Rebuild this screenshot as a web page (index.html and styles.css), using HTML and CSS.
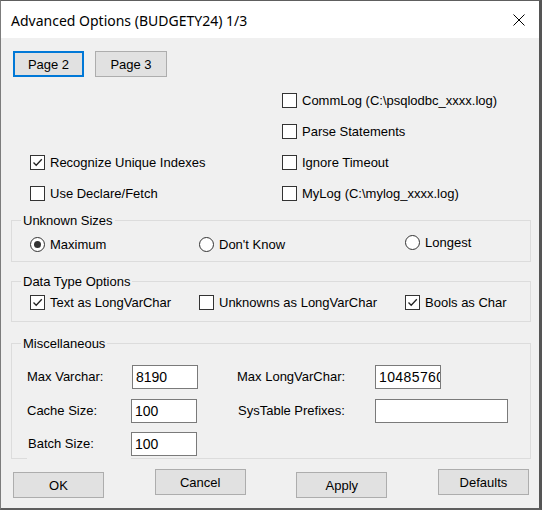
FILE: index.html
```html
<!DOCTYPE html>
<html>
<head>
<meta charset="utf-8">
<link rel="stylesheet" href="styles.css">
</head>
<body>
<div class="window">
  <div class="titlebar">
    <span class="title">Advanced Options (BUDGETY24) 1/3</span>
    <svg class="close" width="12" height="12" viewBox="0 0 12 12"><path d="M0.5 0.5 L11.5 11.5 M11.5 0.5 L0.5 11.5" stroke="#000" stroke-width="1" fill="none"/></svg>
  </div>
  <div class="content">
    <div class="pages">
      <button class="btn page default">Page 2</button>
      <button class="btn page">Page 3</button>
    </div>
    <div class="checks">
      <div></div>
      <label class="opt"><span class="cb"></span>CommLog (C:\psqlodbc_xxxx.log)</label>
      <div></div>
      <label class="opt"><span class="cb"></span>Parse Statements</label>
      <label class="opt"><span class="cb"><svg viewBox="0 0 13 13" width="13" height="13"><path d="M2.5 6.5 L5.2 9.3 L10.8 3.2" stroke="#222" stroke-width="1.3" fill="none"/></svg></span>Recognize Unique Indexes</label>
      <label class="opt"><span class="cb"></span>Ignore Timeout</label>
      <label class="opt"><span class="cb"></span>Use Declare/Fetch</label>
      <label class="opt"><span class="cb"></span>MyLog (C:\mylog_xxxx.log)</label>
    </div>

    <fieldset class="group unknown">
      <legend>Unknown Sizes</legend>
      <div class="row3 radios">
        <label class="opt low"><span class="rb on"></span>Maximum</label>
        <label class="opt low"><span class="rb"></span>Don't Know</label>
        <label class="opt"><span class="rb"></span>Longest</label>
      </div>
    </fieldset>

    <fieldset class="group dtype">
      <legend>Data Type Options</legend>
      <div class="row3">
        <label class="opt"><span class="cb"><svg viewBox="0 0 13 13" width="13" height="13"><path d="M2.5 6.5 L5.2 9.3 L10.8 3.2" stroke="#222" stroke-width="1.3" fill="none"/></svg></span>Text as LongVarChar</label>
        <label class="opt"><span class="cb"></span>Unknowns as LongVarChar</label>
        <label class="opt"><span class="cb"><svg viewBox="0 0 13 13" width="13" height="13"><path d="M2.5 6.5 L5.2 9.3 L10.8 3.2" stroke="#222" stroke-width="1.3" fill="none"/></svg></span>Bools as Char</label>
      </div>
    </fieldset>

    <fieldset class="group misc">
      <legend>Miscellaneous</legend>
      <div class="fields">
        <span class="flabel">Max Varchar:</span>
        <input class="edit short nudge" type="text" value="8190" readonly>
        <span class="flabel">Max LongVarChar:</span>
        <input class="edit short wide" type="text" value="10485760" readonly>

        <span class="flabel">Cache Size:</span>
        <input class="edit short" type="text" value="100" readonly>
        <span class="flabel nudge">SysTable Prefixes:</span>
        <input class="edit long" type="text" value="" readonly>

        <span class="flabel cover">Batch Size:</span>
        <input class="edit short" type="text" value="100" readonly>
      </div>
    </fieldset>

    <div class="actions">
      <button class="btn act lower">OK</button>
      <button class="btn act">Cancel</button>
      <button class="btn act lower">Apply</button>
      <button class="btn act">Defaults</button>
    </div>
  </div>
</div>
</body>
</html>
```

FILE: styles.css
```css
html, body {
  margin: 0;
  padding: 0;
  background: #ffffff;
}

body {
  font-family: "Liberation Sans", Arial, sans-serif;
  font-size: 13px;
  color: #000;
}

.window {
  width: 542px;
  height: 510px;
  box-sizing: border-box;
  border-top: 1px solid #5e5e5e;
  border-left: 1px solid #7c7c7c;
  border-right: 3px solid #555555;
  border-bottom: 2px solid #5e5e5e;
  background: #f0f0f0;
  display: flex;
  flex-direction: column;
  overflow: hidden;
}

.titlebar {
  height: 37px;
  flex: none;
  background: #ffffff;
  display: flex;
  align-items: flex-start;
  justify-content: space-between;
  padding: 0 14px 0 10px;
}

.title {
  font-family: "Noto Sans", "Open Sans", sans-serif;
  font-size: 14px;
  line-height: 20px;
  margin-top: 10px;
  color: #000;
}

.close {
  margin-top: 13px;
  display: block;
}

.content {
  flex: 1;
  display: flex;
  flex-direction: column;
}

/* buttons */
.btn {
  font-family: "Liberation Sans", Arial, sans-serif;
  font-size: 13px;
  color: #000;
  background: #e1e1e1;
  border: 1px solid #adadad;
  box-sizing: border-box;
  height: 26px;
  padding: 0;
  margin: 0;
  border-radius: 0;
}

.pages {
  display: flex;
  gap: 11px;
  padding-left: 12px;
  margin-top: 13px;
}

.page {
  width: 72px;
}

.page.default {
  width: 71px;
  border: 2px solid #0078d7;
}

/* option (checkbox/radio + label) */
.opt {
  display: flex;
  align-items: center;
  gap: 5px;
  height: 15px;
  line-height: 15px;
  white-space: nowrap;
}

.cb {
  width: 15px;
  height: 15px;
  box-sizing: border-box;
  border: 1px solid #333333;
  background: #ffffff;
  flex: none;
  display: flex;
  align-items: center;
  justify-content: center;
}

.cb svg {
  display: block;
}

.rb {
  width: 15px;
  height: 15px;
  box-sizing: border-box;
  border: 1px solid #333333;
  border-radius: 50%;
  background: #ffffff;
  flex: none;
  display: flex;
  align-items: center;
  justify-content: center;
}

.rb.on::after {
  content: "";
  width: 7px;
  height: 7px;
  border-radius: 50%;
  background: #333333;
}

.checks {
  display: grid;
  grid-template-columns: 252px auto;
  grid-auto-rows: 31px;
  align-items: center;
  padding-left: 29px;
  margin-top: 7.5px;
}

/* group boxes */
.group {
  width: 520px;
  box-sizing: border-box;
  margin: 0 0 0 10px;
  border: 1px solid #dcdcdc;
  padding: 0 0 0 9px;
  min-width: 0;
}

.group legend {
  padding: 0 2px;
  line-height: 15px;
  height: 15px;
}

.unknown {
  margin-top: 4.5px;
  padding-bottom: 9px;
}

.dtype {
  margin-top: 12px;
  padding-bottom: 11px;
}

.misc {
  margin-top: 14px;
  padding-bottom: 2px;
}

.row3 {
  display: grid;
  grid-template-columns: 169px 206px auto;
  align-items: start;
  padding-left: 9px;
}

.radios {
  padding-top: 7px;
}

.radios .low {
  margin-top: 2px;
}

.dtype .row3 {
  padding-top: 6px;
}

.fields {
  display: grid;
  grid-template-columns: 104px 106px 138px 133px;
  grid-template-rows: 24px 24px 24px;
  row-gap: 9.5px;
  align-items: center;
  padding-left: 6px;
  padding-top: 14px;
}

.flabel {
  line-height: 24px;
  height: 24px;
  white-space: nowrap;
}

.flabel.nudge {
  padding-left: 1px;
}

.flabel.cover {
  background: #f0f0f0;
  box-shadow: 0 4px 0 #f0f0f0;
  padding-left: 1px;
}

.edit {
  font-family: "Liberation Sans", Arial, sans-serif;
  font-size: 14px;
  color: #000;
  height: 24px;
  box-sizing: border-box;
  border: 1px solid #7a7a7a;
  background: #ffffff;
  padding: 0 0 0 3px;
  margin: 0;
  outline: none;
  border-radius: 0;
}

.edit.short {
  width: 66px;
}

.edit.wide {
  letter-spacing: 0.4px;
}

.edit.nudge {
  margin-left: 1px;
}

.edit.long {
  width: 133px;
}

/* bottom buttons */
.actions {
  display: flex;
  justify-content: space-between;
  align-items: flex-start;
  padding: 0 10px 0 12px;
  margin-top: 10px;
}

.act {
  width: 91px;
}

.act.lower {
  margin-top: 3px;
}
```
